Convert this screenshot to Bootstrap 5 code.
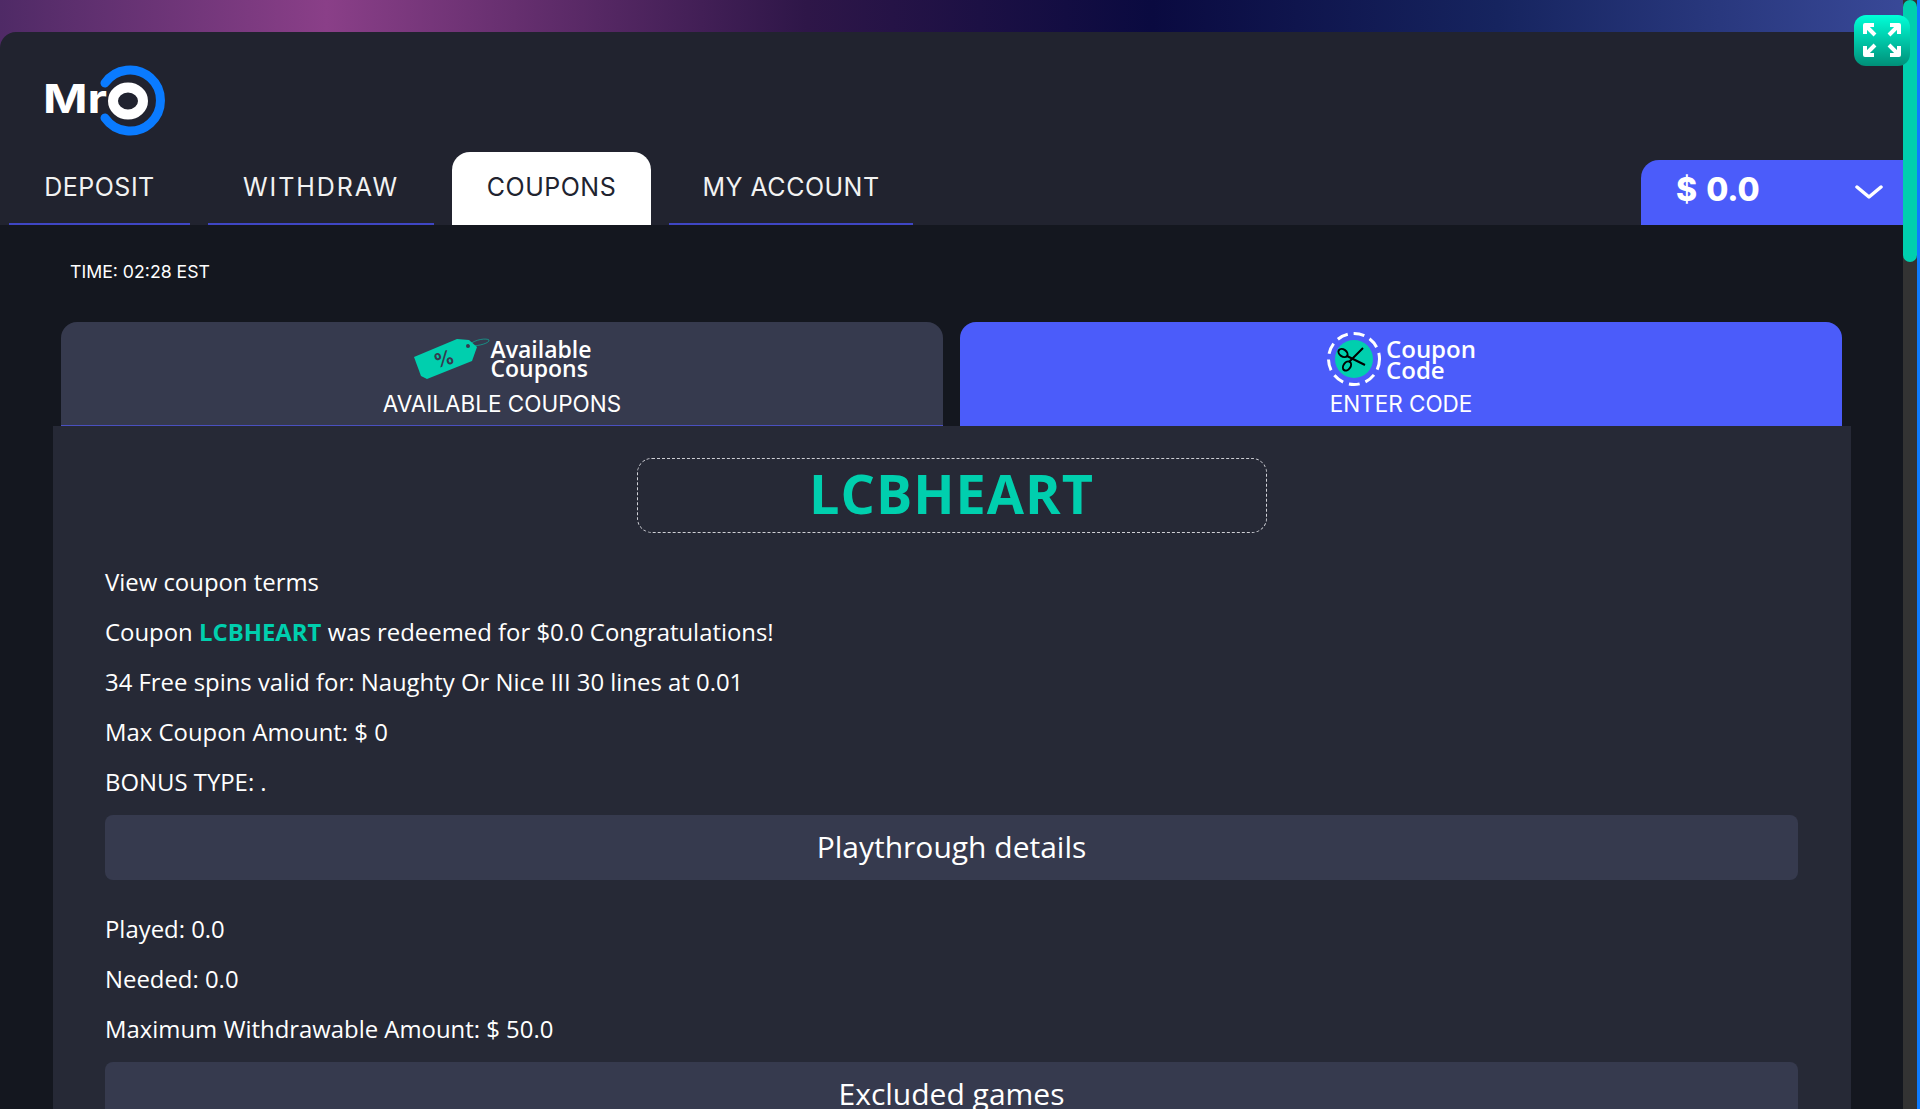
<!DOCTYPE html>
<html lang="en">
<head>
    <meta charset="UTF-8">
    <meta name="viewport" content="width=device-width, initial-scale=1">
    <title>Coupons</title>
    <link href="https://cdn.jsdelivr.net/npm/bootstrap@5.3.3/dist/css/bootstrap.min.css" rel="stylesheet">
    <script src="https://cdn.jsdelivr.net/npm/bootstrap@5.3.3/dist/js/bootstrap.bundle.min.js"></script>
    <style>
        :root {
            --head-bg: #21232f;
            --page-bg: #14171f;
            --panel-bg: #262936;
            --bar-bg: #363a4e;
            --teal: #00cfae;
            --blue: #4b5cfa;
        }

        html, body {
            height: 1109px;
            overflow: hidden;
        }

        body {
            padding-top: 32px;
            color: #fff;
            font-family: "Open Sans", sans-serif;
            background: linear-gradient(90deg, #4f2a66 0%, #8a3f88 17%, #2e1648 42%, #0a0a40 60%, #16245f 78%, #3a4a9a 100%);
        }

        .site-head {
            height: 193px;
            padding-left: 9px;
            background: var(--head-bg);
            border-radius: 16px 16px 0 0;
        }

        .logo-wrap {
            height: 120px;
            padding: 33px 0 0 35px;
        }

        .main-tabs {
            gap: 18px;
        }

        .main-tabs .nav-link {
            height: 73px;
            padding: 14px 0 0;
            line-height: 42px;
            text-align: center;
            font-family: "Inter", sans-serif;
            font-size: 25px;
            letter-spacing: .5px;
            color: #f2f2f2;
            border-bottom: 2px solid #3f46c4;
            border-radius: 0;
        }

        .main-tabs .nav-link.active {
            color: #21232f;
            background: #fff;
            border-bottom: 0;
            border-radius: 18px 18px 0 0;
        }

        .tab-deposit { width: 181px; }
        .tab-withdraw { width: 226px; }
        .tab-coupons { width: 199px; }
        .tab-account { width: 244px; }

        .main-tabs .tab-withdraw .nav-link {
            letter-spacing: 1.9px;
        }

        .balance-btn {
            width: 262px;
            height: 65px;
            margin-right: 17px;
            padding: 0 20px 0 35px;
            color: #fff;
            font-family: "Inter", sans-serif;
            font-size: 32px;
            font-weight: 800;
            word-spacing: 2px;
            background: var(--blue);
            border: 0;
            border-radius: 18px 0 0 0;
        }

        .balance-btn span {
            margin-bottom: 6px;
        }

        .balance-btn svg {
            margin-bottom: 2px;
        }

        .site-main {
            height: 884px;
            background: var(--page-bg);
        }

        .time-row {
            height: 97px;
            padding: 35px 0 0 70px;
            font-family: "Inter", sans-serif;
            font-size: 17.7px;
            line-height: 24px;
        }

        .offer-tabs {
            gap: 17px;
            margin: 0 78px 0 61px;
        }

        .offer-tab {
            width: 882px;
            height: 104px;
            padding-top: 9px;
            background: var(--bar-bg);
            border-radius: 16px 16px 0 0;
        }

        .offer-tab.first-tab {
            border-bottom: 1px solid #4a50c0;
        }

        .offer-tab.active-tab {
            background: var(--blue);
        }

        .tab-graphic {
            height: 55px;
        }

        .graphic-text {
            font-size: 23px;
            font-weight: 600;
            line-height: 19px;
        }

        .active-tab .graphic-text {
            font-size: 24px;
            line-height: 21px;
        }

        .tab-label {
            margin-top: 4px;
            font-family: "Inter", sans-serif;
            font-size: 22.5px;
            line-height: 28px;
        }

        .coupon-panel {
            height: 700px;
            margin: 0 69px 0 53px;
            padding: 32px 53px 0 52px;
            background: var(--panel-bg);
        }

        .code-box {
            width: 630px;
            height: 75px;
            margin: 0 auto 32px;
            color: var(--teal);
            font-size: 54px;
            font-weight: 700;
            letter-spacing: 1px;
            line-height: 69px;
            border: 1px dashed #cfd0d6;
            border-radius: 15px;
        }

        .info-line {
            margin-bottom: 17.1px;
            font-size: 23.9px;
            line-height: 33px;
        }

        .info-line b {
            color: var(--teal);
            font-weight: 700;
        }

        .section-bar {
            height: 65px;
            margin-top: 1px;
            margin-bottom: 31.5px;
            font-size: 30px;
            line-height: 63px;
            background: var(--bar-bg);
            border-radius: 8px;
        }

        .expand-btn {
            position: fixed;
            top: 15px;
            right: 10px;
            width: 56px;
            height: 51px;
            padding: 0;
            border: 0;
            border-radius: 12px;
            background: linear-gradient(180deg, #00ffd8 0%, #008f78 100%);
        }

        .fake-scroll {
            position: fixed;
            top: 0;
            right: 0;
            width: 17px;
            height: 1109px;
            background: #333;
            border-right: 3px solid #0d7bff;
        }

        .fake-scroll div {
            height: 262px;
            background: var(--teal);
            border-radius: 7px;
        }
    </style>
</head>
<body>
    <header class="site-head">
        <div class="logo-wrap">
            <svg width="125" height="75" viewBox="0 0 125 75">
                <path d="M61 18 A30.5 30.5 0 1 1 61 53" fill="none" stroke="#0a7bff" stroke-width="9" stroke-linecap="round"/>
                <ellipse cx="84" cy="36" rx="15" ry="13.5" fill="none" stroke="#fff" stroke-width="10"/>
                <text x="-1" y="48" font-family="Inter, sans-serif" font-size="40" font-weight="700" fill="#fff" textLength="64" lengthAdjust="spacingAndGlyphs">Mr</text>
            </svg>
        </div>
        <div class="d-flex align-items-end justify-content-between">
            <ul class="nav main-tabs">
                <li class="nav-item tab-deposit"><a class="nav-link" href="#">DEPOSIT</a></li>
                <li class="nav-item tab-withdraw"><a class="nav-link" href="#">WITHDRAW</a></li>
                <li class="nav-item tab-coupons"><a class="nav-link active" href="#">COUPONS</a></li>
                <li class="nav-item tab-account"><a class="nav-link" href="#">MY ACCOUNT</a></li>
            </ul>
            <button class="balance-btn d-flex align-items-center justify-content-between" type="button">
                <span>$ 0.0</span>
                <svg width="28" height="16" viewBox="0 0 28 16"><path d="M2 3 L14 13 L26 3" fill="none" stroke="#fff" stroke-width="3.5" stroke-linecap="round" stroke-linejoin="round"/></svg>
            </button>
        </div>
    </header>

    <main class="site-main">
        <div class="time-row">TIME: 02:28 EST</div>

        <div class="d-flex offer-tabs">
            <div class="offer-tab first-tab text-center">
                <div class="tab-graphic d-flex align-items-center justify-content-center">
                    <svg width="78" height="44" viewBox="0 0 78 44">
                        <path d="M1 20 L44 2 L56 3 L64 10 L59 24 L14 42 L8 39 Z" fill="#00cfae"/>
                        <circle cx="55" cy="9" r="2" fill="#363a4e"/>
                        <path d="M56 8 C62 2 74 1 76 3 C77 6 66 9 58 9" fill="none" stroke="#00cfae" stroke-width="1" opacity=".55"/>
                        <text x="31" y="29" text-anchor="middle" font-family="Inter, sans-serif" font-size="20" font-weight="700" fill="#363a4e" transform="rotate(-18 31 22)">%</text>
                    </svg>
                    <div class="graphic-text text-start">Available<br>Coupons</div>
                </div>
                <div class="tab-label">AVAILABLE COUPONS</div>
            </div>
            <div class="offer-tab active-tab text-center">
                <div class="tab-graphic d-flex align-items-center justify-content-center gap-1">
                    <svg width="56" height="54" viewBox="0 0 56 54">
                        <circle cx="28" cy="27" r="25.5" fill="none" stroke="#fff" stroke-width="3" stroke-dasharray="11 6"/>
                        <circle cx="28" cy="27" r="19" fill="#00cfae"/>
                        <g fill="none" stroke="#000">
                            <ellipse cx="17" cy="21" rx="5" ry="3.5" stroke-width="2" transform="rotate(35 17 21)"/>
                            <ellipse cx="21" cy="34" rx="3.5" ry="5" stroke-width="2" transform="rotate(35 21 34)"/>
                            <path d="M21 24 L39 33 M23 30 L37 16" stroke-width="2"/>
                        </g>
                    </svg>
                    <div class="graphic-text text-start">Coupon<br>Code</div>
                </div>
                <div class="tab-label">ENTER CODE</div>
            </div>
        </div>

        <section class="coupon-panel">
            <div class="code-box text-center">LCBHEART</div>
            <p class="info-line">View coupon terms</p>
            <p class="info-line">Coupon <b>LCBHEART</b> was redeemed for $0.0 Congratulations!</p>
            <p class="info-line">34 Free spins valid for: Naughty Or Nice III 30 lines at 0.01</p>
            <p class="info-line">Max Coupon Amount: $ 0</p>
            <p class="info-line">BONUS TYPE: .</p>
            <div class="section-bar text-center">Playthrough details</div>
            <p class="info-line">Played: 0.0</p>
            <p class="info-line">Needed: 0.0</p>
            <p class="info-line">Maximum Withdrawable Amount: $ 50.0</p>
            <div class="section-bar text-center">Excluded games</div>
        </section>
    </main>

    <div class="fake-scroll"><div></div></div>
    <button class="expand-btn" type="button" aria-label="Fullscreen">
        <svg width="56" height="51" viewBox="0 0 56 51">
            <g fill="none" stroke="#fff" stroke-width="4" stroke-linejoin="round">
                <path d="M11 19 V10 H20 M11 10 L21 20"/>
                <path d="M36 10 H45 V19 M45 10 L35 20"/>
                <path d="M11 31 V40 H20 M11 40 L21 30"/>
                <path d="M45 31 V40 H36 M45 40 L35 30"/>
            </g>
        </svg>
    </button>
</body>
</html>
